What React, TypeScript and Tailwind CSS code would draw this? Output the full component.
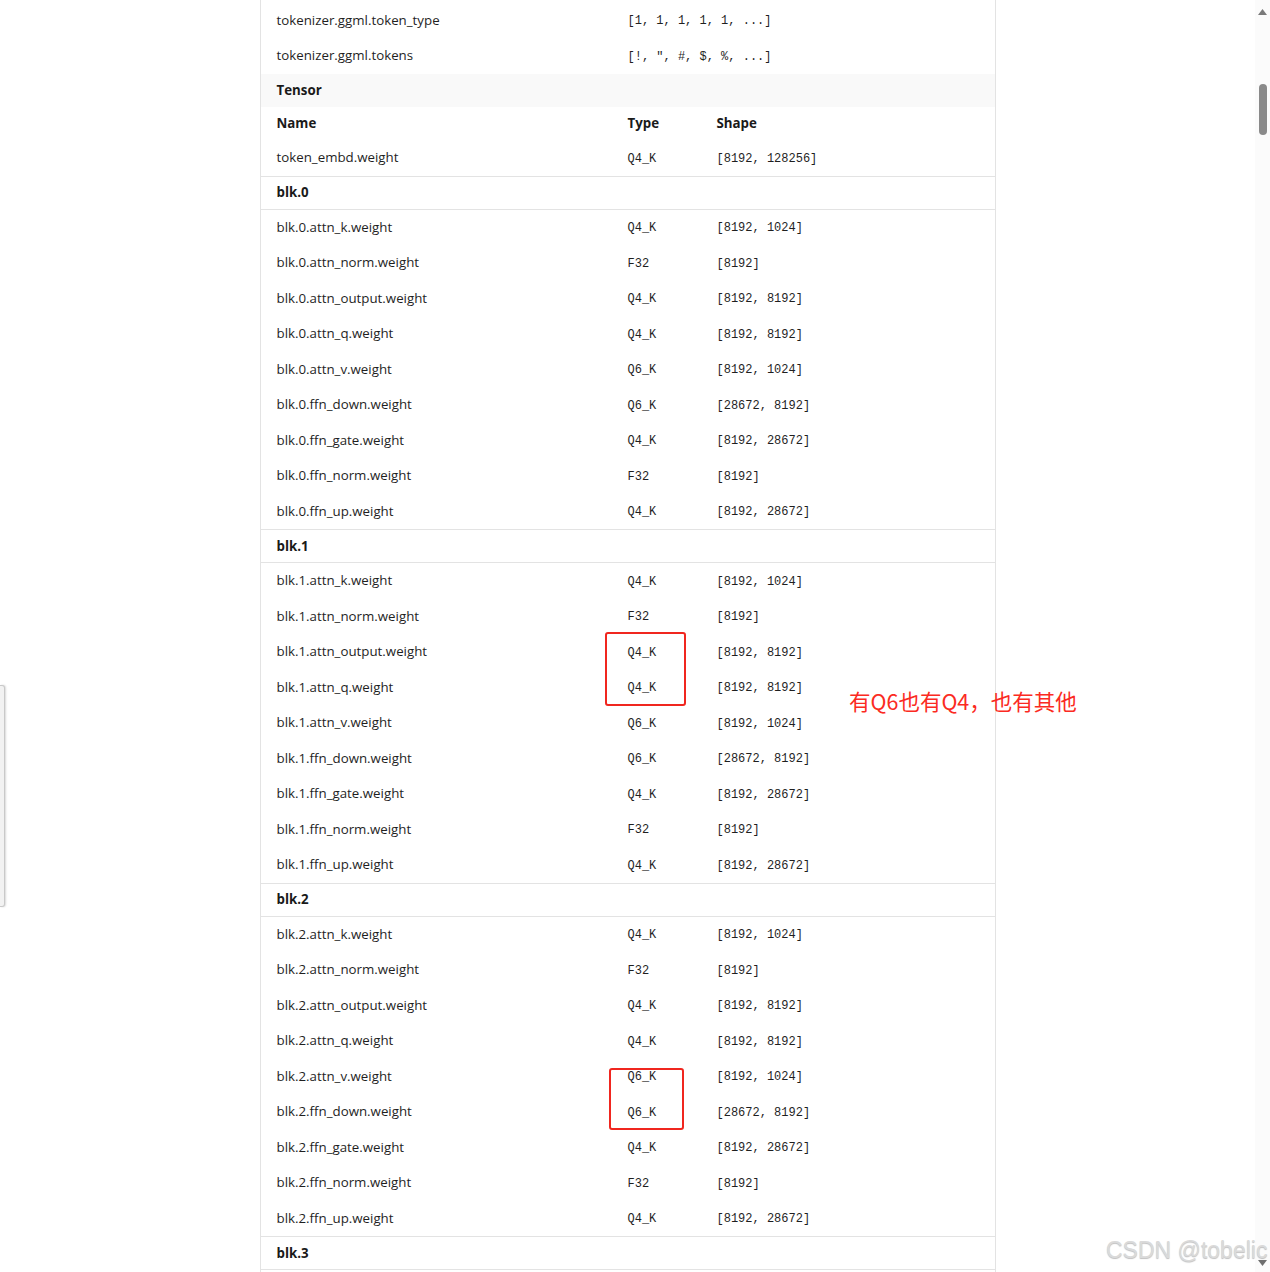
import React from "react";

interface Tensor {
  name: string;
  type: string;
  shape: string;
}

const layers = [
  ["attn_k", "Q4_K", "[8192, 1024]"],
  ["attn_norm", "F32", "[8192]"],
  ["attn_output", "Q4_K", "[8192, 8192]"],
  ["attn_q", "Q4_K", "[8192, 8192]"],
  ["attn_v", "Q6_K", "[8192, 1024]"],
  ["ffn_down", "Q6_K", "[28672, 8192]"],
  ["ffn_gate", "Q4_K", "[8192, 28672]"],
  ["ffn_norm", "F32", "[8192]"],
  ["ffn_up", "Q4_K", "[8192, 28672]"],
];

const blockRows = (n: number): Tensor[] =>
  layers.map(([part, type, shape]) => ({
    name: `blk.${n}.${part}.weight`,
    type,
    shape,
  }));

const font = "font-['Open_Sans','Noto_Sans',sans-serif] text-[13.3px]";
const sans = `${font} mt-[1px]`;
const mono = "font-['Liberation_Mono',monospace] text-[12px] mt-[2px]";

function Row({ name, type, shape }: Tensor) {
  return (
    <div className="grid grid-cols-[351px_89px_1fr] items-center h-[35.5px] px-4 text-[#1f1f1f]">
      <span className={sans}>{name}</span>
      <span className={mono}>{type}</span>
      <span className={mono}>{shape}</span>
    </div>
  );
}

function KeyValue({ label, value }: { label: string; value: string }) {
  return (
    <div className="grid grid-cols-[351px_1fr] items-center h-[35.5px] px-4 text-[#1f1f1f]">
      <span className={sans}>{label}</span>
      <span className={mono}>{value}</span>
    </div>
  );
}

function BlockHeader({ label }: { label: string }) {
  return (
    <div className="flex items-center h-[34px] px-4 border-y border-[#e3e3e3]">
      <span className={`${sans} font-bold text-[#1a1a1a]`}>{label}</span>
    </div>
  );
}

export default function App() {
  return (
    <div className="relative flex w-[1270px] h-[1272px] overflow-hidden bg-white">
      {/* Page */}
      <div className="flex-1 flex justify-center">
        <div className="w-[736px] h-full border-x border-[#e3e3e3] pt-[2.5px]">
          <KeyValue label="tokenizer.ggml.token_type" value="[1, 1, 1, 1, 1, ...]" />
          <KeyValue label="tokenizer.ggml.tokens" value={'[!, ", #, $, %, ...]'} />

          <div className="h-[33px] flex items-center px-4 bg-[#f9f9f9]">
            <span className={`${sans} font-bold text-[#1a1a1a]`}>Tensor</span>
          </div>
          <div className={`grid grid-cols-[351px_89px_1fr] items-center h-[33px] px-4 ${font} font-bold text-[#1a1a1a]`}>
            <span className="mt-[1px]">Name</span>
            <span className="mt-[1px]">Type</span>
            <span className="mt-[1px]">Shape</span>
          </div>
          <div className="grid grid-cols-[351px_89px_1fr] items-center h-[36px] px-4 text-[#1f1f1f]">
            <span className={sans}>token_embd.weight</span>
            <span className={mono}>Q4_K</span>
            <span className={mono}>[8192, 128256]</span>
          </div>

          {[0, 1, 2].map((n) => (
            <div key={n}>
              <BlockHeader label={`blk.${n}`} />
              {blockRows(n).map((t) => (
                <Row key={t.name} {...t} />
              ))}
            </div>
          ))}
          <BlockHeader label="blk.3" />
        </div>
      </div>

      {/* Scrollbar */}
      <div className="w-[15px] h-full bg-[#fbfbfb] flex flex-col items-center">
        <svg width="9" height="6" viewBox="0 0 9 6" className="mt-[9px]">
          <path d="M0 6 L4.5 0 L9 6 Z" fill="#7a7a7a" />
        </svg>
        <div className="mt-[69px] w-[8px] h-[51px] rounded-full bg-[#8a8a8a]" />
        <div className="flex-1" />
        <svg width="9" height="6" viewBox="0 0 9 6" className="mb-[6px]">
          <path d="M0 0 L9 0 L4.5 6 Z" fill="#6e6e6e" />
        </svg>
      </div>

      {/* Edge tab on the left */}
      <div className="absolute left-0 top-[685px] w-[5px] h-[222px] rounded-r-[3px] border border-l-0 border-[#c9c9c9] bg-[#f2f2f2] shadow-[1px_0_2px_rgba(0,0,0,0.15)]" />

      {/* Annotations */}
      <div className="absolute left-[605px] top-[632px] w-[81px] h-[74px] border-[2.5px] border-[#f0261f] rounded-[3px]" />
      <div className="absolute left-[609px] top-[1068px] w-[75px] h-[62px] border-[2.5px] border-[#f0261f] rounded-[3px]" />
      <div className="absolute left-[849px] top-[685px] text-[21.5px] leading-[32px] text-[#fb2a22] font-['Noto_Sans_CJK_SC',sans-serif]">
        有Q6也有Q4，也有其他
      </div>

      {/* Watermark */}
      <div className="absolute left-[1106px] top-[1235px] whitespace-nowrap text-[23px] leading-[30px] text-[#dadada] font-['Liberation_Sans',Arial,sans-serif] [text-shadow:0_1px_1px_rgba(0,0,0,0.25)]">
        CSDN @tobelic
      </div>
    </div>
  );
}
